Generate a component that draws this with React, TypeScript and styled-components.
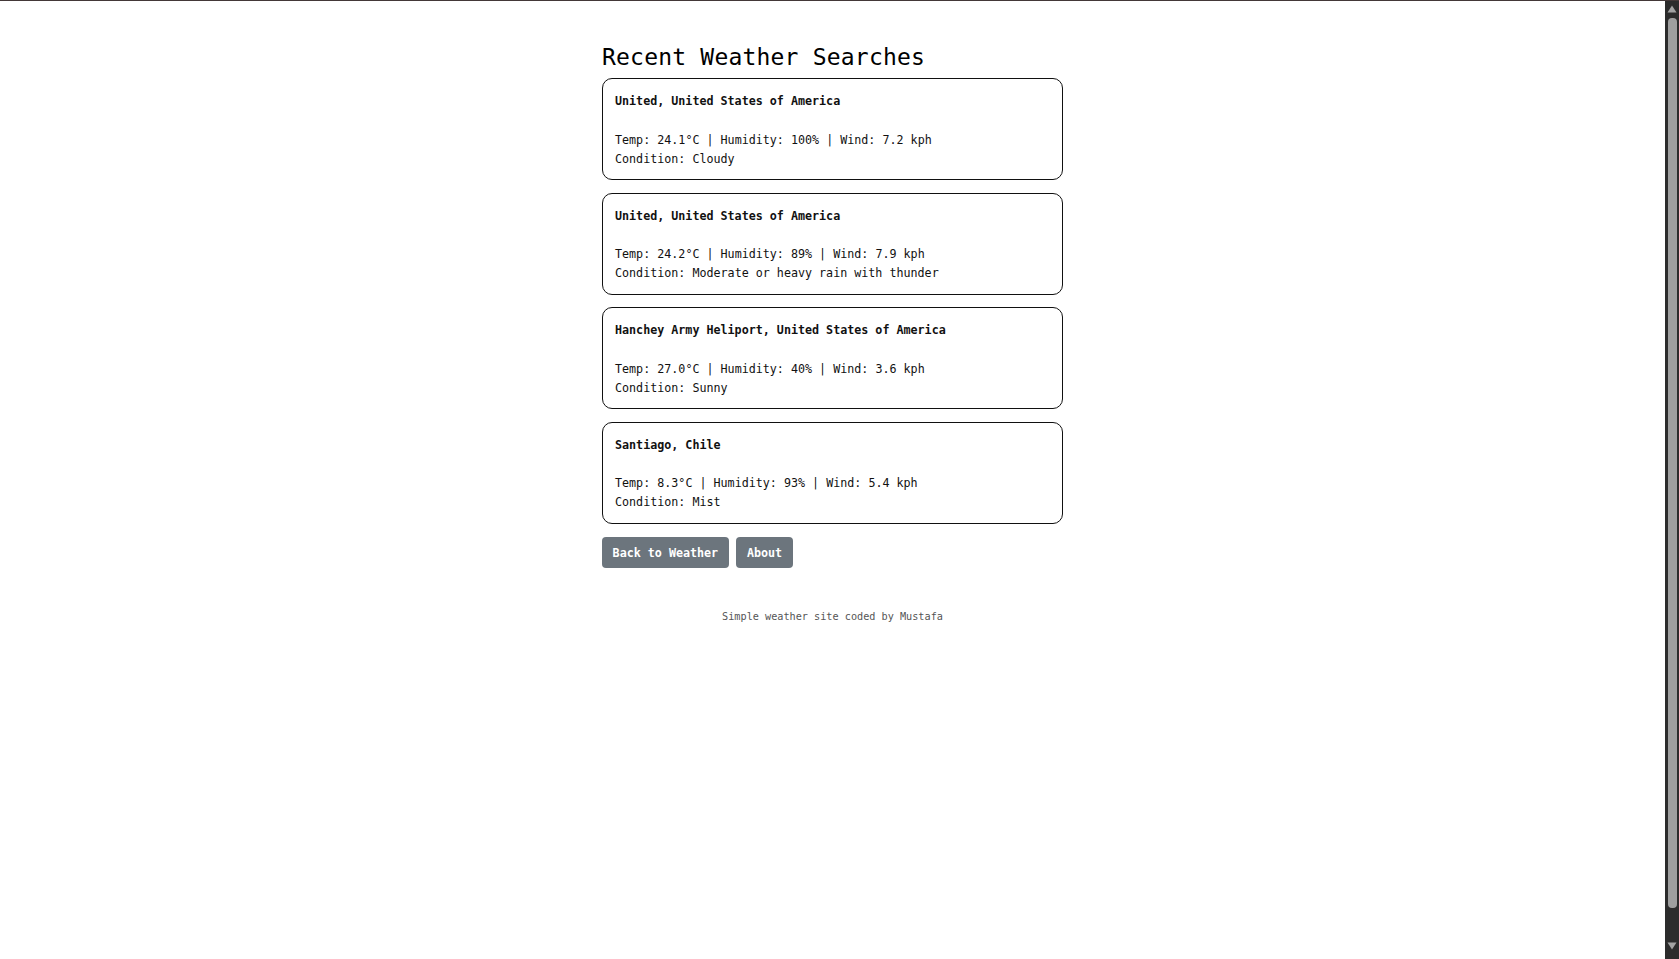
import React from "react";
import styled, { createGlobalStyle } from "styled-components";

const GlobalStyle = createGlobalStyle`
  html {
    background: #ffffff;
  }
  body {
    margin: 0;
    background: #ffffff;
    color: #000000;
    font-family: "DejaVu Sans Mono", "Liberation Mono", monospace;
    border-top: 1px solid #433838;
    overflow: hidden;
  }
  * { box-sizing: border-box; }
`;

const Page = styled.div`
  height: calc(100vh - 1px);
  display: flex;
`;

const Viewport = styled.div`
  flex: 1;
  display: flex;
  justify-content: center;
  padding-top: 41px;
`;

const Scrollbar = styled.div`
  width: 14px;
  flex: none;
  background: #2c2c2c;
  display: flex;
  flex-direction: column;
  align-items: center;
  padding: 4px 0 9px;
`;

const Arrow = styled.svg`
  width: 10px;
  height: 8px;
  flex: none;
  display: block;
`;

const Thumb = styled.div`
  width: 9px;
  flex: 1;
  margin: 5px 0 34px;
  background: #9f9f9f;
  border-radius: 4px;
`;

const Container = styled.main`
  width: 461px;
  display: flex;
  flex-direction: column;
`;

const Heading = styled.h1`
  margin: 0 0 6px;
  font-size: 23px;
  line-height: 30px;
  letter-spacing: 0.2px;
  font-weight: 400;
  color: #000;
`;

const List = styled.div`
  display: flex;
  flex-direction: column;
  gap: 12.5px;
`;

const Card = styled.section`
  border: 1px solid #111;
  border-radius: 10px;
  padding: 13px 12px 10.5px;
  font-size: 11.7px;
  line-height: 19px;
  color: #111;
`;

const Title = styled.div`
  font-weight: 700;
  margin-bottom: 19.5px;
`;

const Line = styled.div``;

const Actions = styled.div`
  display: flex;
  gap: 7.6px;
  margin-top: 13.5px;
`;

const Button = styled.button`
  height: 31px;
  padding: 0 10.6px;
  border: none;
  border-radius: 4px;
  background: #6c757d;
  color: #ffffff;
  font-family: "DejaVu Sans Mono", "Liberation Mono", monospace;
  font-size: 11.7px;
  font-weight: 700;
  cursor: pointer;
`;

const Footer = styled.footer`
  margin-top: 40.5px;
  text-align: center;
  font-size: 10.2px;
  line-height: 16px;
  color: #555;
`;

type Search = {
  place: string;
  temp: string;
  humidity: string;
  wind: string;
  condition: string;
};

const searches: Search[] = [
  { place: "United, United States of America", temp: "24.1", humidity: "100", wind: "7.2", condition: "Cloudy" },
  { place: "United, United States of America", temp: "24.2", humidity: "89", wind: "7.9", condition: "Moderate or heavy rain with thunder" },
  { place: "Hanchey Army Heliport, United States of America", temp: "27.0", humidity: "40", wind: "3.6", condition: "Sunny" },
  { place: "Santiago, Chile", temp: "8.3", humidity: "93", wind: "5.4", condition: "Mist" },
];

export default function App() {
  return (
    <>
      <GlobalStyle />
      <Page>
        <Viewport>
          <Container>
            <Heading>Recent Weather Searches</Heading>
            <List>
              {searches.map((s, i) => (
                <Card key={i}>
                  <Title>{s.place}</Title>
                  <Line>
                    Temp: {s.temp}°C | Humidity: {s.humidity}% | Wind: {s.wind} kph
                  </Line>
                  <Line>Condition: {s.condition}</Line>
                </Card>
              ))}
            </List>
            <Actions>
              <Button>Back to Weather</Button>
              <Button>About</Button>
            </Actions>
            <Footer>Simple weather site coded by Mustafa</Footer>
          </Container>
        </Viewport>
        <Scrollbar>
          <Arrow viewBox="0 0 10 8">
            <path d="M5 0.5 L9.5 7.5 L0.5 7.5 Z" fill="#a3a3a3" />
          </Arrow>
          <Thumb />
          <Arrow viewBox="0 0 10 8">
            <path d="M0.5 0.5 L9.5 0.5 L5 7.5 Z" fill="#a3a3a3" />
          </Arrow>
        </Scrollbar>
      </Page>
    </>
  );
}
